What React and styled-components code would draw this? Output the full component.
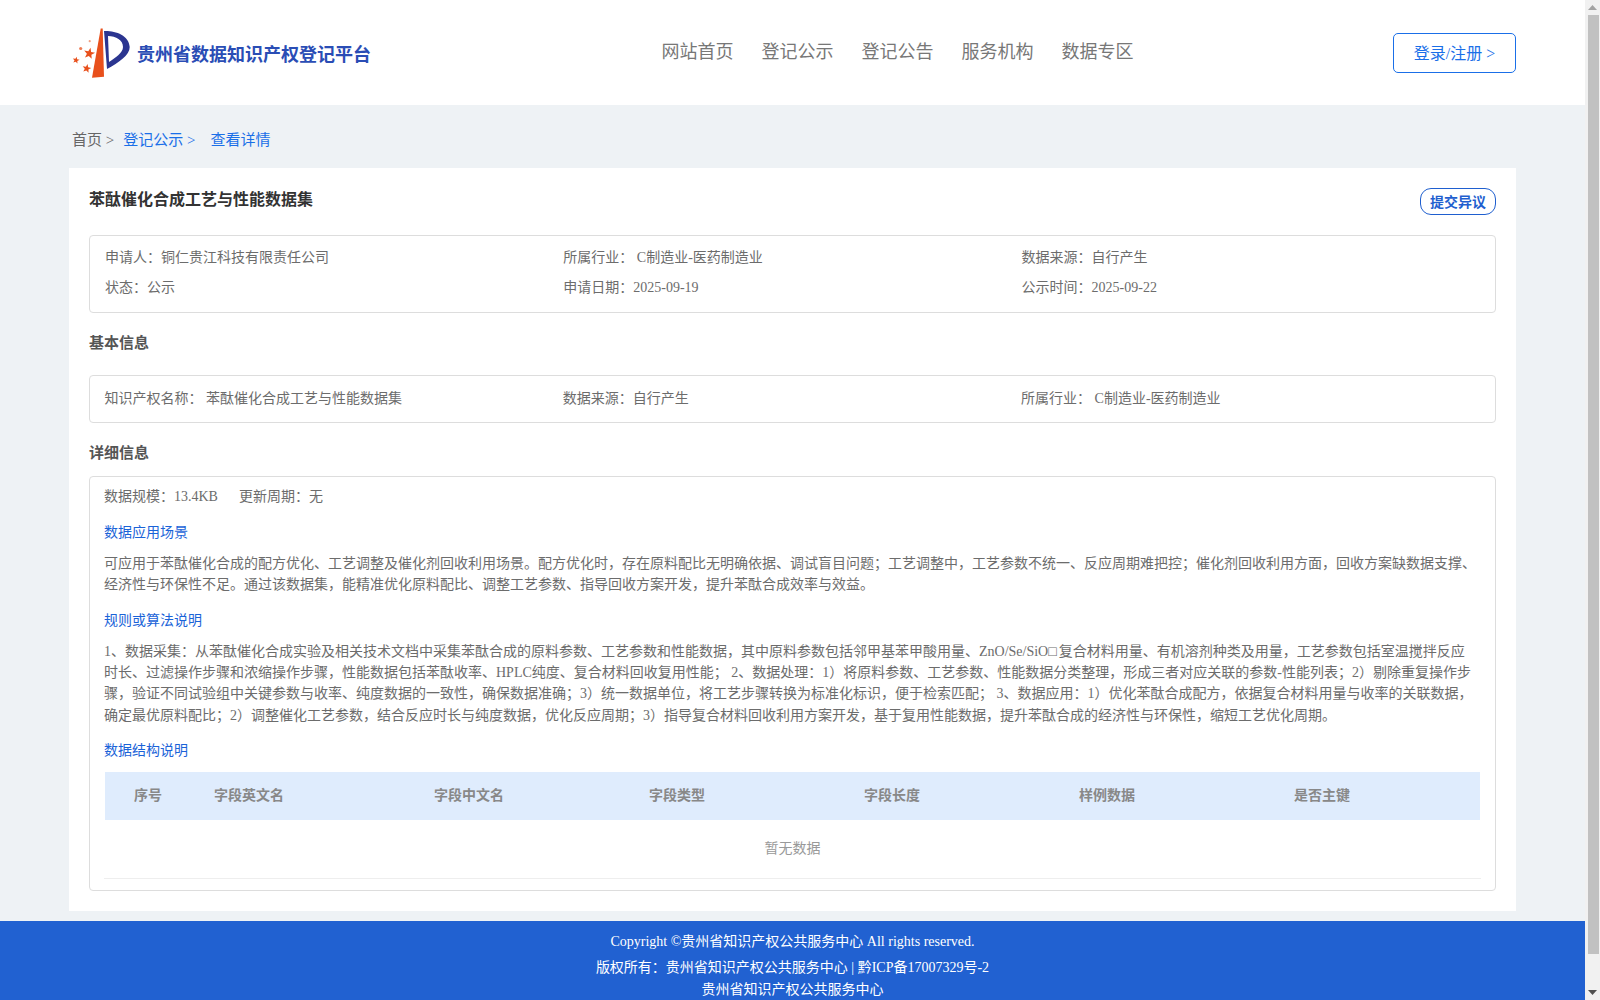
import React from 'react';
import styled, { createGlobalStyle } from 'styled-components';

const Global = createGlobalStyle`
  html, body { margin: 0; padding: 0; height: 100%; overflow: hidden; }
  body { font-family: "Liberation Serif", "Noto Sans CJK SC", serif; font-size: 14px; color: #6c6c6c; background: #eef2f5; }
  * { box-sizing: border-box; }
`;
const Shell = styled.div`display: flex; width: 1600px; height: 1000px; overflow: hidden;`;
const Page = styled.div`width: 1585px; flex: none; background: #eef2f5;`;
const Header = styled.header`height: 105px; background: #fff; display: flex; align-items: center; padding: 0 69px 0 71px;`;
const Brand = styled.div`display: flex; align-items: center; width: 590px; flex: none;`;
const BrandName = styled.span`font-size: 18px; font-weight: 700; color: #2a4db5; margin-left: 5px; white-space: nowrap;`;
const Nav = styled.nav`display: flex; gap: 28px; flex: 1; margin-top: -5px; padding-left: 0.5px;`;
const NavItem = styled.a`font-size: 18px; color: #777; white-space: nowrap;`;
const LoginButton = styled.button`width: 123px; height: 40px; border: 1px solid #1a6fe8; border-radius: 5px; background: #fff; color: #1a6fe8; font: inherit; font-size: 16px; padding: 0 0 2px;`;
const Crumbs = styled.div`height: 63px; padding: 4px 0 0 72px; display: flex; align-items: center; font-size: 15px; color: #555;`;
const Crumb = styled.span`color: ${p => p.$active ? '#1a6fe8' : '#666'}; margin-right: ${p => p.$gap}px; white-space: nowrap;`;
const Card = styled.main`margin-left: 69px; width: 1447px; height: 743px; background: #fff; padding: 20px;`;
const TitleRow = styled.div`display: flex; justify-content: space-between; align-items: flex-start; height: 47px;`;
const Title = styled.h1`margin: 0; font-size: 16px; line-height: 24px; font-weight: 700; color: #333;`;
const Dispute = styled.button`width: 76px; height: 27px; border: 1px solid #1f5fcf; border-radius: 11px; background: #fff; color: #1f5fcf; font: inherit; font-size: 14px; font-weight: 700; padding: 0 0 2px;`;
const Box = styled.section`border: 1px solid #ddd; border-radius: 4px; padding: ${p => p.$pad || '0 14px'};`;
const InfoGrid = styled.div`display: grid; grid-template-columns: repeat(3, 458.3px); grid-auto-rows: ${p => p.$row || 30}px; padding-top: ${p => p.$top || 7}px; padding-left: ${p => p.$left || 1}px;`;
const Info = styled.div`line-height: 29px; white-space: nowrap;`;
const SectionTitle = styled.h2`margin: 0; font-size: 15px; line-height: 22px; font-weight: 700; color: #555; padding: ${p => p.$pad};`;
const Meta = styled.div`display: flex; gap: 21px; height: 24px; line-height: 24px; margin-top: 8px;`;
const SubTitle = styled.h3`margin: 0; font-size: 14px; font-weight: 400; line-height: 22px; color: #1a63d8; padding-top: ${p => p.$top}px;`;
const Paragraph = styled.p`margin: 0; padding: 9px 3px 0 0; line-height: 21.33px;`;
const Tofu = styled.span`letter-spacing: 2px;`;
const TableHead = styled.div`display: grid; grid-template-columns: 80px 220px 215px 215px 215px 215px 183px; margin: 10px 1px 0; height: 48px; background: #dfecfd; padding: 0 0 3px 29px; align-items: center; font-weight: 700; color: #888;`;
const HeadCell = styled.span`white-space: nowrap;`;
const Empty = styled.div`height: 59px; line-height: 58px; text-align: center; color: #999; border-bottom: 1px solid #eee;`;
const Footer = styled.footer`margin-top: 10px; height: 112px; background: #2161d1; color: #fff; text-align: center; font-size: 14px; padding-top: 9px;`;
const FooterLine = styled.div`height: ${p => p.$h}px; line-height: ${p => p.$h}px;`;
const Scrollbar = styled.aside`width: 15px; flex: none; background: #f1f1f1; display: flex; flex-direction: column; align-items: center;`;
const ScrollButton = styled.div`height: 15px; flex: none; display: flex; align-items: center; justify-content: center;`;
const ScrollThumb = styled.div`width: 11px; height: 939px; background: #c1c1c1; margin-left: 1px;`;
const Gap = styled.div`flex: 1;`;

const star = (cx, cy, r) => {
  const pts = [];
  for (let i = 0; i < 10; i++) {
    const rad = i % 2 ? r * 0.42 : r;
    const a = -Math.PI / 2 + (i * Math.PI) / 5 + 0.2;
    pts.push(`${(cx + rad * Math.cos(a)).toFixed(1)},${(cy + rad * Math.sin(a)).toFixed(1)}`);
  }
  return pts.join(' ');
};

const Logo = () => (
  <svg width="61" height="52" viewBox="0 0 61 52" aria-hidden="true">
    <path d="M29.7 1.5 L31.7 1.5 L33 49.7 L21 50.7 Z" fill="#e8501c" />
    <path fillRule="evenodd" d="M33 4 C44 3.5 58 8 58.7 20 C59 28 47 36 36 42 Z M37 9 L38 35 C44 31 52 26 52 20 C52 13 45 9 37 9 Z" fill="#2b3590" />
    <g fill="#e8501c">
      <polygon points={star(18.3, 26.5, 5.8)} />
      <polygon points={star(5, 33.2, 3.6)} />
      <polygon points={star(15.7, 41.5, 4.6)} />
      <circle cx="9.7" cy="21.5" r="1.6" opacity=".75" />
      <circle cx="18.7" cy="14.2" r="1.1" opacity=".55" />
    </g>
  </svg>
);

const nav = ['网站首页', '登记公示', '登记公告', '服务机构', '数据专区'];
const heads = ['序号', '字段英文名', '字段中文名', '字段类型', '字段长度', '样例数据', '是否主键'];

export default function App() {
  return (
    <Shell>
      <Global />
      <Page>
        <Header>
          <Brand><Logo /><BrandName>贵州省数据知识产权登记平台</BrandName></Brand>
          <Nav>{nav.map(n => <NavItem key={n}>{n}</NavItem>)}</Nav>
          <LoginButton>登录/注册 &gt;</LoginButton>
        </Header>
        <Crumbs>
          <Crumb $gap={9}>首页 &gt;</Crumb>
          <Crumb $active $gap={15}>登记公示 &gt;</Crumb>
          <Crumb $active>查看详情</Crumb>
        </Crumbs>
        <Card>
          <TitleRow>
            <Title>苯酞催化合成工艺与性能数据集</Title>
            <Dispute>提交异议</Dispute>
          </TitleRow>
          <Box $pad="0 14px 9px">
            <InfoGrid>
              <Info>申请人：铜仁贵江科技有限责任公司</Info>
              <Info>所属行业： C制造业-医药制造业</Info>
              <Info>数据来源：自行产生</Info>
              <Info>状态：公示</Info>
              <Info>申请日期：2025-09-19</Info>
              <Info>公示时间：2025-09-22</Info>
            </InfoGrid>
          </Box>
          <SectionTitle $pad="19px 0 21px">基本信息</SectionTitle>
          <Box $pad="0 14px 9px">
            <InfoGrid $top={8} $left={0.5} $row={29}>
              <Info>知识产权名称： 苯酞催化合成工艺与性能数据集</Info>
              <Info>数据来源：自行产生</Info>
              <Info>所属行业： C制造业-医药制造业</Info>
            </InfoGrid>
          </Box>
          <SectionTitle $pad="19px 0 12px">详细信息</SectionTitle>
          <Box $pad="0 14px 11px">
            <Meta><span>数据规模：13.4KB</span><span>更新周期：无</span></Meta>
            <SubTitle $top={13}>数据应用场景</SubTitle>
            <Paragraph>可应用于苯酞催化合成的配方优化、工艺调整及催化剂回收利用场景。配方优化时，存在原料配比无明确依据、调试盲目问题；工艺调整中，工艺参数不统一、反应周期难把控；催化剂回收利用方面，回收方案缺数据支撑、经济性与环保性不足。通过该数据集，能精准优化原料配比、调整工艺参数、指导回收方案开发，提升苯酞合成效率与效益。</Paragraph>
            <SubTitle $top={14}>规则或算法说明</SubTitle>
            <Paragraph>1、数据采集：从苯酞催化合成实验及相关技术文档中采集苯酞合成的原料参数、工艺参数和性能数据，其中原料参数包括邻甲基苯甲酸用量、ZnO/Se/SiO<Tofu>□</Tofu>复合材料用量、有机溶剂种类及用量，工艺参数包括室温搅拌反应时长、过滤操作步骤和浓缩操作步骤，性能数据包括苯酞收率、HPLC纯度、复合材料回收复用性能； 2、数据处理：1）将原料参数、工艺参数、性能数据分类整理，形成三者对应关联的参数-性能列表；2）剔除重复操作步骤，验证不同试验组中关键参数与收率、纯度数据的一致性，确保数据准确；3）统一数据单位，将工艺步骤转换为标准化标识，便于检索匹配； 3、数据应用：1）优化苯酞合成配方，依据复合材料用量与收率的关联数据，确定最优原料配比；2）调整催化工艺参数，结合反应时长与纯度数据，优化反应周期；3）指导复合材料回收利用方案开发，基于复用性能数据，提升苯酞合成的经济性与环保性，缩短工艺优化周期。</Paragraph>
            <SubTitle $top={14}>数据结构说明</SubTitle>
            <TableHead>{heads.map(h => <HeadCell key={h}>{h}</HeadCell>)}</TableHead>
            <Empty>暂无数据</Empty>
          </Box>
        </Card>
        <Footer>
          <FooterLine $h={24}>Copyright ©贵州省知识产权公共服务中心 All rights reserved.</FooterLine>
          <FooterLine $h={27}>版权所有：贵州省知识产权公共服务中心 | 黔ICP备17007329号-2</FooterLine>
          <FooterLine $h={17}>贵州省知识产权公共服务中心</FooterLine>
        </Footer>
      </Page>
      <Scrollbar>
        <ScrollButton><svg width="9" height="5" viewBox="0 0 9 5"><path d="M4.5 0 L9 5 H0 Z" fill="#a3a3a3" /></svg></ScrollButton>
        <ScrollThumb />
        <Gap />
        <ScrollButton><svg width="9" height="5" viewBox="0 0 9 5"><path d="M0 0 H9 L4.5 5 Z" fill="#505050" /></svg></ScrollButton>
      </Scrollbar>
    </Shell>
  );
}
